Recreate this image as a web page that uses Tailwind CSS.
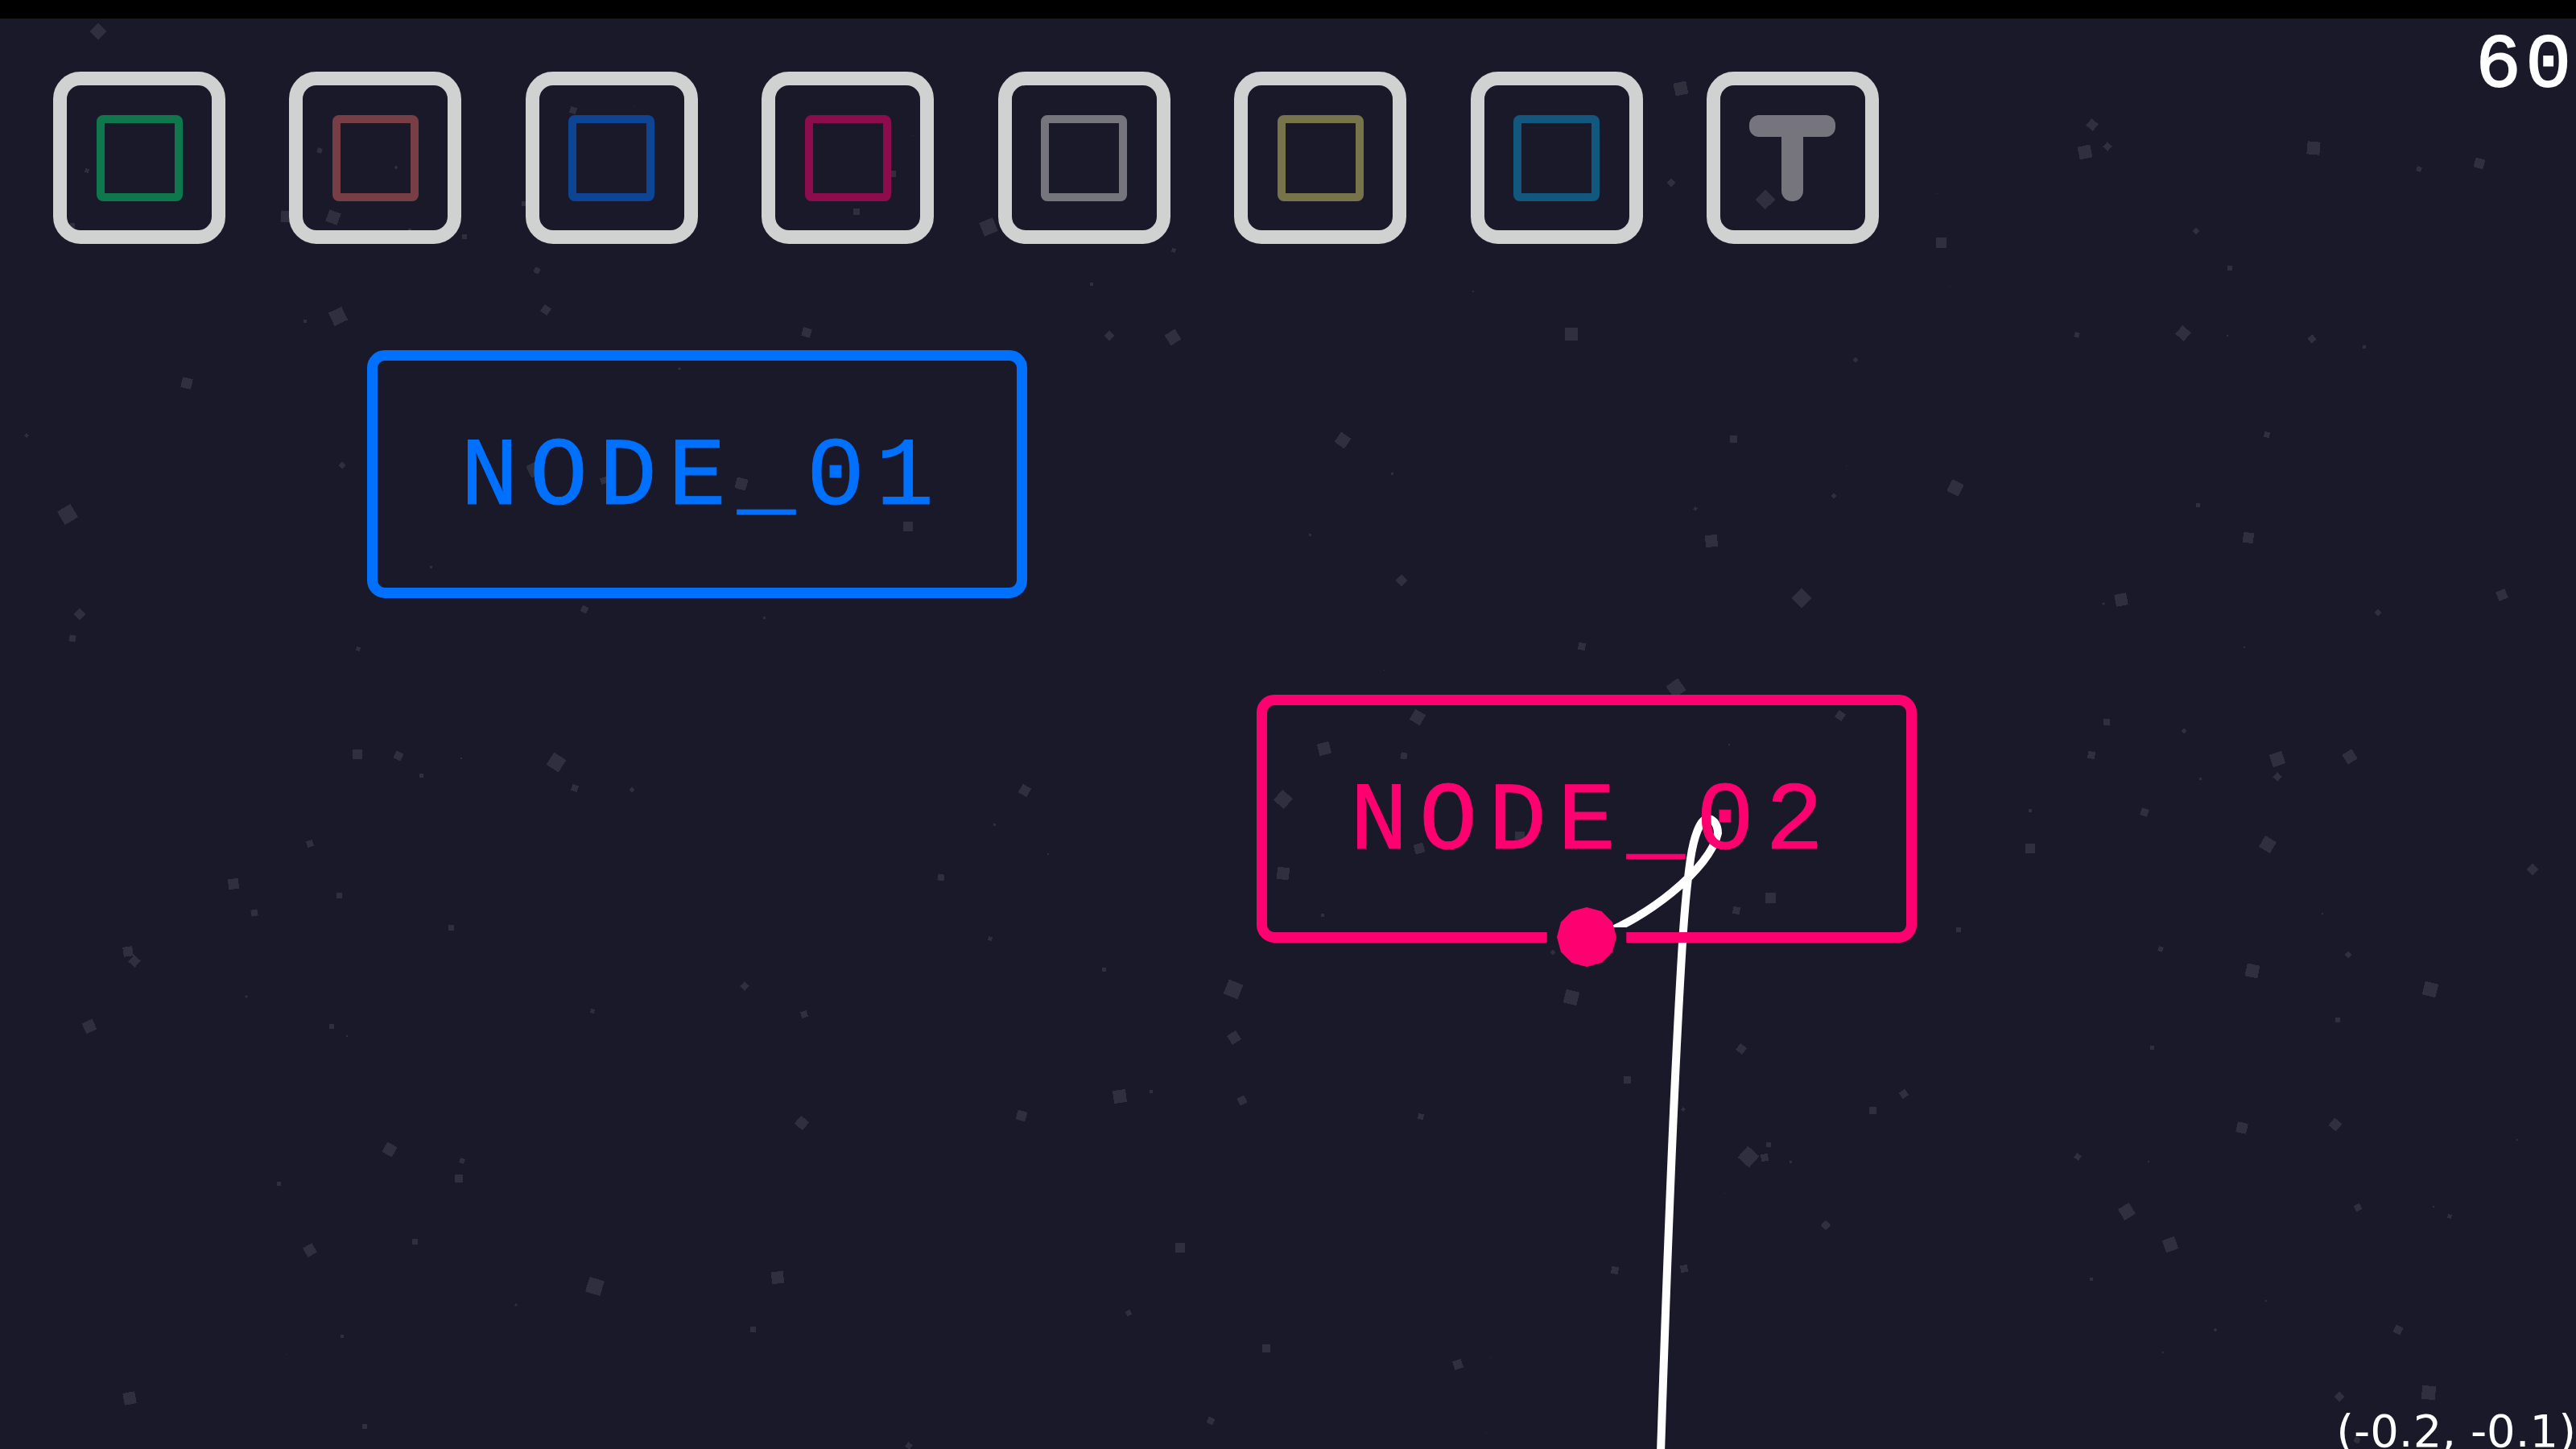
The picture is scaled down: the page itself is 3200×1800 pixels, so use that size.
<!DOCTYPE html>
<html lang="en">
<head>
<meta charset="utf-8">
<title>Node editor</title>
<script src="https://cdn.jsdelivr.net/npm/@tailwindcss/browser@4"></script>
</head>
<body class="bg-[#1a1929]">
<div class="relative flex h-screen flex-col overflow-hidden bg-[#1a1929]">
  <div class="h-[23px] shrink-0 bg-black"></div>

  <!-- star field -->
  <svg id="stars" class="pointer-events-none absolute inset-0 h-full w-full" fill="#302f3e" shape-rendering="crispEdges" aria-hidden="true"></svg>

  <!-- connector -->
  <svg class="pointer-events-none absolute inset-0 h-full w-full" fill="none" aria-hidden="true">
    <path stroke="#fff" stroke-width="10" d="M1971 1168C2045 1144 2125 1078 2134 1035C2134 1024 2128 1017 2121 1017C2112 1017 2104 1040 2100 1067C2096 1095 2092 1140 2090 1171C2082 1300 2071 1560 2063 1805"/>
  </svg>

  <header class="relative flex items-start justify-between">
    <nav class="mt-[66px] ml-[66px] flex w-[2268px] justify-between" aria-label="Tools">
      <button aria-label="Green node" class="flex size-[214px] items-center justify-center rounded-[34px] border-[17px] border-[#d0d2d1]"><span class="size-[107px] rounded-lg border-[10px] border-[#0e774b]"></span></button>
      <button aria-label="Red node" class="flex size-[214px] items-center justify-center rounded-[34px] border-[17px] border-[#d0d2d1]"><span class="size-[107px] rounded-lg border-[10px] border-[#773e46]"></span></button>
      <button aria-label="Blue node" class="flex size-[214px] items-center justify-center rounded-[34px] border-[17px] border-[#d0d2d1]"><span class="size-[107px] rounded-lg border-[10px] border-[#0d4494]"></span></button>
      <button aria-label="Pink node" class="flex size-[214px] items-center justify-center rounded-[34px] border-[17px] border-[#d0d2d1]"><span class="size-[107px] rounded-lg border-[10px] border-[#8d0c4d]"></span></button>
      <button aria-label="Gray node" class="flex size-[214px] items-center justify-center rounded-[34px] border-[17px] border-[#d0d2d1]"><span class="size-[107px] rounded-lg border-[10px] border-[#76757e]"></span></button>
      <button aria-label="Yellow node" class="flex size-[214px] items-center justify-center rounded-[34px] border-[17px] border-[#d0d2d1]"><span class="size-[107px] rounded-lg border-[10px] border-[#77744b]"></span></button>
      <button aria-label="Cyan node" class="flex size-[214px] items-center justify-center rounded-[34px] border-[17px] border-[#d0d2d1]"><span class="size-[107px] rounded-lg border-[10px] border-[#12577e]"></span></button>
      <button aria-label="Text" class="flex size-[214px] items-center justify-center rounded-[34px] border-[17px] border-[#d0d2d1]">
        <svg class="size-[107px]" viewBox="0 0 107 107" fill="#76757e"><rect width="107" height="27" rx="12"/><rect x="40" width="27" height="107" rx="13"/></svg>
      </button>
    </nav>
    <output class="mt-[12px] font-['Liberation_Mono'] text-[94px] leading-[94px] tracking-[6px] text-white [-webkit-text-stroke:2px_#fff]">60</output>
  </header>

  <!-- nodes -->
  <section class="absolute top-[435px] left-[456px] flex h-[308px] w-[820px] items-center justify-center rounded-[22px] border-[13px] border-[#0070ff]">
    <h2 class="pt-[10px] pl-[14px] font-['Liberation_Mono'] text-[120px] leading-[150px] tracking-[14px] text-[#0070ff] [-webkit-text-stroke:1px_#0070ff]">NODE_01</h2>
  </section>
  <section class="absolute top-[863px] left-[1561px] flex h-[308px] w-[820px] items-center justify-center rounded-[22px] border-[13px] border-[#ff0070]">
    <h2 class="pt-[10px] pl-[14px] font-['Liberation_Mono'] text-[120px] leading-[150px] tracking-[14px] text-[#ff0070] [-webkit-text-stroke:1px_#ff0070]">NODE_02</h2>
    <svg class="absolute -bottom-[43px] left-1/2 h-[74px] w-[99px] -translate-x-1/2" viewBox="0 0 99 74" aria-hidden="true">
      <rect y="25" width="99" height="20" fill="#191828"/>
      <path fill="#ff0070" d="M49.500 0L68 5L81.500 18.500L86.500 37L81.500 55.500L68 69L49.500 74L31 69L17.500 55.500L12.500 37L17.500 18.500L31 5Z"/>
    </svg>
  </section>

  <footer class="relative mt-auto flex h-[62px] justify-end">
    <output class="font-['DejaVu_Sans'] text-[56px] leading-[80px] whitespace-nowrap text-white">(-0.2, -0.1)</output>
  </footer>
</div>
<script>
// Each star: centre x, centre y, side, rotation in degrees
const stars = [
[122,39,15,45],[108,212,5,20],[90,280,6,0],[356,269,14,5],[414,270,15,20],[397,187,6,20],[492,208,3,45],[509,286,4,0],[577,294,6,10],[651,253,6,0],[712,137,8,15],[788,132,1,0],[1109,216,8,0],[1064,263,8,5],[1134,168,1,0],[667,336,7,30],[678,385,10,35],[420,393,18,-25],[379,399,4,0],
[1228,282,18,-22],[1458,311,5,20],[1356,353,4,0],[1830,362,2,45],[2076,227,8,45],[2088,110,16,-12],[2193,248,17,45],
[2599,155,11,40],[2590,189,16,-12],[2618,182,8,40],[2874,184,16,5],[3005,210,6,15],[3080,203,12,15],[2406,240,1,0],[2411,301,13,0],[2728,287,7,45],[2770,333,6,0],[2422,356,1,0],[2580,416,6,15],[2712,414,14,42],[2767,417,2,0],[2872,421,8,-35],[2937,431,4,20],[2816,540,7,10],
[2429,606,16,25],[2730,627,5,0],[2793,668,13,3],[2635,745,15,-10],[2613,750,3,30],[3108,739,12,-25],[2954,761,6,45],[2788,804,2,0],[2617,897,8,3],[2713,908,5,40],[2598,938,9,5],[2733,967,3,0],[2829,943,16,-18],[2829,965,8,40],[2919,940,14,-32],[2522,1007,4,0],[2664,1009,9,20],[2522,1054,12,-5],[2817,1049,16,30],[3146,1080,10,45],[2885,1135,2,0],[2433,1155,6,-10],[2684,1179,6,20],[2917,1186,7,45],
[2798,1206,16,12],[3019,1229,17,15],[2904,1267,6,0],[2673,1301,5,0],[2785,1401,13,13],[2901,1397,12,40],[2581,1437,7,40],[2669,1443,2,45],[2642,1505,16,-32],[2929,1500,8,-25],[3023,1499,2,0],[3043,1511,5,15],[3127,1416,2,0],[2696,1546,16,-20],[2598,1589,4,0],[2815,1616,2,0],[2752,1652,4,45],[2687,1680,2,0],[2979,1652,10,25],[2906,1735,9,45],[3017,1730,17,5],[2928,1789,7,20],
[232,476,13,12],[33,541,4,30],[425,578,6,45],[84,639,19,-30],[99,763,10,45],[90,793,8,12],[726,757,8,30],[445,806,5,15],[444,937,12,3],[495,939,10,28],[523,963,5,0],[573,942,2,0],[691,947,18,33],[714,979,8,15],[785,981,5,40],[385,1048,8,-18],[290,1098,13,-4],[535,704,3,0],[664,583,16,-25],[750,597,8,-15],
[844,458,3,20],[921,601,14,15],[1128,654,12,3],[1002,413,11,15],[949,767,3,0],
[421,1112,7,0],[316,1134,8,-12],[560,1152,7,0],[159,1182,12,-8],[167,1194,11,42],[306,1238,3,30],[736,1256,5,20],[111,1275,14,-25],[412,1275,6,0],[431,1287,2,0],[484,1428,14,28],[574,1442,6,20],[570,1464,10,0],[346,1470,5,0],[385,1553,13,-28],[515,1542,7,0],[739,1598,19,18],[641,1621,3,30],[425,1660,4,20],[355,1682,1,0],[161,1737,15,-10],[453,1772,6,10],
[1230,1166,5,20],[1371,1204,5,0],[925,1225,8,40],[999,1260,8,-18],[1532,1229,19,22],[1533,1289,13,-32],[1391,1362,16,-8],[1430,1356,4,0],[1543,1367,10,-28],[1269,1386,12,15],[996,1395,13,42],[1466,1550,12,2],[966,1587,15,-2],[935,1651,7,0],[1402,1631,6,-25],[1573,1675,10,-4],[1504,1765,8,22],[1129,1796,7,42],
[1643,1137,4,0],[2199,1115,13,0],[2157,1131,9,5],[1929,1183,5,40],[1952,1239,17,15],[2163,1303,10,40],[2021,1341,9,0],[2365,1359,9,-33],[2326,1379,9,0],[2091,1378,4,30],[1765,1387,7,5],[2172,1437,19,42],[2197,1422,6,0],[2192,1438,9,-5],[2224,1443,3,0],[2142,1482,1,0],[2268,1522,9,38],[2006,1578,9,3],[2092,1576,9,-5],[1811,1695,11,-17],[1851,1686,1,0],[1846,1779,1,0],
[1378,417,9,45],[1457,419,15,-32],[1952,415,16,3],[2305,447,5,45],[1668,547,15,35],[2153,545,9,0],[2293,578,1,0],[1729,588,3,0],[2278,616,5,40],[2106,632,4,30],[1627,664,3,0],[2126,672,15,-2],[1741,721,10,45],[2238,743,17,45],[1965,803,9,3],[1719,832,1,0],[2082,855,18,-35],[1761,891,15,30],[2286,889,10,35],
[1645,930,15,-15],[1744,939,8,10],[2148,925,2,0],[1594,993,17,42],[1594,1085,15,8],[1888,1039,12,0],[1763,1054,12,-15],[1273,982,12,30],[1169,1090,8,10],[1235,1024,3,0],[1302,1061,2,0]
];
const field = document.getElementById("stars");
for (const [x, y, s, r] of stars) {
  const star = document.createElementNS("http://www.w3.org/2000/svg", "rect");
  star.setAttribute("x", x - s / 2);
  star.setAttribute("y", y - s / 2);
  star.setAttribute("width", s);
  star.setAttribute("height", s);
  star.setAttribute("transform", `rotate(${r} ${x} ${y})`);
  field.append(star);
}
</script>
</body>
</html>
